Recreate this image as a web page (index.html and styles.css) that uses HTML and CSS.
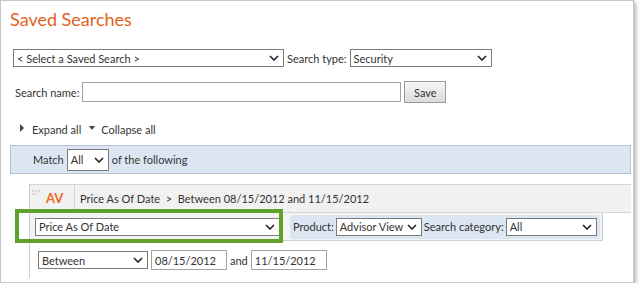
FILE: index.html
```html
<!DOCTYPE html>
<html lang="en">
<head>
    <meta charset="UTF-8">
    <title>Saved Searches</title>
    <link rel="stylesheet" href="styles.css">
</head>
<body>
    <div class="frame">
        <h1>Saved Searches</h1>

        <div class="row row-saved">
            <div class="select select-saved">
                <span>&lt; Select a Saved Search &gt;</span>
                <svg class="chevron" viewBox="0 0 10 6"><path d="M1 1 L5 5 L9 1"/></svg>
            </div>
            <span class="label">Search type:</span>
            <div class="select select-type">
                <span>Security</span>
                <svg class="chevron" viewBox="0 0 10 6"><path d="M1 1 L5 5 L9 1"/></svg>
            </div>
        </div>

        <div class="row row-name">
            <span class="label">Search name:</span>
            <input type="text" class="text-input name-input">
            <button class="btn">Save</button>
        </div>

        <div class="row row-toggle">
            <span class="tri tri-right"></span>
            <span class="label">Expand all</span>
            <span class="tri tri-down"></span>
            <span class="label">Collapse all</span>
        </div>

        <div class="match-bar">
            <span class="label">Match</span>
            <div class="select select-match">
                <span>All</span>
                <svg class="chevron" viewBox="0 0 10 6"><path d="M1 1 L5 5 L9 1"/></svg>
            </div>
            <span class="label">of the following</span>
        </div>

        <div class="criteria">
            <div class="crit-head">
                <svg class="grip" viewBox="0 0 10 6">
                    <circle cx="1" cy="1" r="0.7"/><circle cx="4" cy="1" r="0.7"/><circle cx="7" cy="1" r="0.7"/>
                    <circle cx="1" cy="4" r="0.7"/><circle cx="4" cy="4" r="0.7"/>
                </svg>
                <span class="badge">AV</span>
                <span class="crit-summary">Price As Of Date&nbsp; &gt;&nbsp; Between 08/15/2012 and 11/15/2012</span>
            </div>

            <div class="crit-edit">
                <div class="select select-field">
                    <span>Price As Of Date</span>
                    <svg class="chevron" viewBox="0 0 10 6"><path d="M1 1 L5 5 L9 1"/></svg>
                </div>
                <div class="pill">
                    <span class="label">Product:</span>
                    <div class="select select-product">
                        <span>Advisor View</span>
                        <svg class="chevron" viewBox="0 0 10 6"><path d="M1 1 L5 5 L9 1"/></svg>
                    </div>
                    <span class="label">Search category:</span>
                    <div class="select select-category">
                        <span>All</span>
                        <svg class="chevron" viewBox="0 0 10 6"><path d="M1 1 L5 5 L9 1"/></svg>
                    </div>
                </div>
                <div class="highlight"></div>
            </div>

            <div class="crit-values">
                <div class="select select-op">
                    <span>Between</span>
                    <svg class="chevron" viewBox="0 0 10 6"><path d="M1 1 L5 5 L9 1"/></svg>
                </div>
                <input type="text" class="text-input date-input" value="08/15/2012">
                <span class="label">and</span>
                <input type="text" class="text-input date-input" value="11/15/2012">
            </div>
        </div>
    </div>
</body>
</html>
```

FILE: styles.css
```css
/* Page */
body {
    margin: 0;
    font-family: 'Lato', sans-serif;
    font-size: 11px;
    color: #333;
    background: #fff;
}

.frame {
    width: 634px;
    height: 283px;
    box-sizing: border-box;
    border: 1px solid #c6c6c6;
    box-shadow: 2px 2px 4px rgba(0, 0, 0, 0.3);
}

h1 {
    margin: 0;
    padding: 7px 0 0 9px;
    font-size: 18px;
    font-weight: 400;
    color: #e2621a;
    height: 36px;
    box-sizing: border-box;
}

/* Rows */
.row {
    display: flex;
    align-items: center;
    gap: 3px;
}

.row-saved {
    margin-top: 12px;
    padding-left: 12px;
}

.row-name {
    margin-top: 14px;
    padding-left: 14px;
}

.row-toggle {
    margin-top: 20px;
    padding-left: 19px;
    gap: 0;
}

.label {
    white-space: nowrap;
}

/* Select boxes */
.select {
    display: flex;
    align-items: center;
    justify-content: space-between;
    height: 18px;
    box-sizing: border-box;
    border: 1px solid #7a7a7a;
    background: #fff;
    padding: 0 4px 0 3px;
    color: #333;
    white-space: nowrap;
}

.chevron {
    flex: none;
    width: 10px;
    height: 6px;
    fill: none;
    stroke: #222;
    stroke-width: 1.6;
}

.select-saved { width: 271px; }
.select-type { width: 142px; }

/* Inputs */
.text-input {
    height: 20px;
    box-sizing: border-box;
    border: 1px solid #a3a3a3;
    font: inherit;
    color: #333;
    padding: 0 3px;
    margin: 0;
}

.name-input { width: 319px; }

.btn {
    width: 42px;
    height: 22px;
    font: inherit;
    color: #333;
    border: 1px solid #9a9a9a;
    background: linear-gradient(#f6f6f6, #dcdcdc);
    padding: 0;
}

/* Expand / collapse triangles */
.tri {
    width: 0;
    height: 0;
    border-style: solid;
    margin-right: 8px;
}

.tri-right {
    border-width: 4px 0 4px 4px;
    border-color: transparent transparent transparent #444;
    margin-top: -4px;
}

.tri-down {
    border-width: 4px 3.5px 0 3.5px;
    border-color: #444 transparent transparent transparent;
    margin-left: 8px;
    margin-right: 6px;
    margin-top: -4px;
}

/* Match bar */
.match-bar {
    display: flex;
    align-items: center;
    gap: 3px;
    margin: 9px 2px 0 9px;
    height: 29px;
    box-sizing: border-box;
    padding-left: 22px;
    background: #dce6f2;
    border: 1px solid #b3c1d0;
}

.select-match { width: 42px; height: 22px; }

/* Criteria */
.criteria {
    margin: 10px 2px 0 28px;
    border-left: 1px solid #cfcfcf;
    height: 94px;
}

.crit-head {
    display: flex;
    align-items: center;
    height: 29px;
    box-sizing: border-box;
    background: #f1f1f1;
    border-top: 1px solid #d4d4d4;
    border-bottom: 1px solid #d4d4d4;
}

.grip {
    width: 10px;
    height: 6px;
    fill: #a8a8a8;
    margin: -12px 0 0 2px;
    align-self: center;
}

.badge {
    color: #ee6a24;
    font-weight: 700;
    font-size: 13px;
    width: 28px;
    padding-left: 4px;
    height: 27px;
    line-height: 27px;
    border-right: 1px solid #d4d4d4;
}

.crit-summary {
    padding-left: 5px;
    white-space: nowrap;
}

.crit-edit {
    position: relative;
    display: flex;
    align-items: center;
    width: 573px;
    height: 28px;
    box-sizing: border-box;
    background: #f3f3f3;
    border-right: 1px solid #cfcfcf;
    border-bottom: 1px solid #cfcfcf;
    padding-left: 5px;
}

.select-field { width: 245px; }

.pill {
    display: flex;
    align-items: center;
    gap: 2px;
    margin-left: 10px;
    height: 24px;
    padding: 0 3px;
    background: #dce6f2;
    border-radius: 4px;
}

.select-product { width: 86px; }
.select-category { width: 91px; }

/* Green annotation box */
.highlight {
    position: absolute;
    left: -15px;
    top: -4px;
    width: 268px;
    height: 34px;
    box-sizing: border-box;
    border: 4px solid #5ea12b;
}

.crit-values {
    display: flex;
    align-items: center;
    gap: 3px;
    padding: 9px 0 0 8px;
}

.select-op { width: 110px; }
.date-input { width: 76px; }
```
